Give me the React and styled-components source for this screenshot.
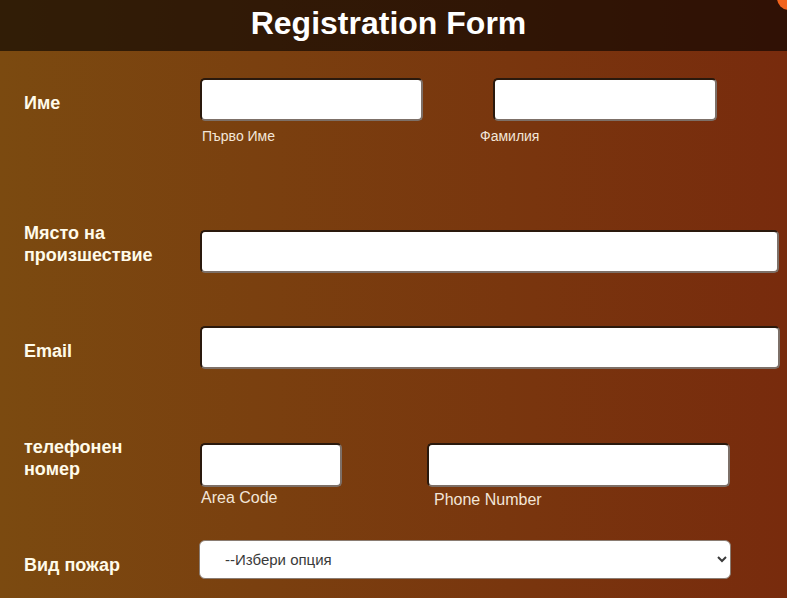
import React from "react";
import styled, { createGlobalStyle } from "styled-components";

const GlobalStyle = createGlobalStyle`
  html, body {
    margin: 0;
    padding: 0;
  }
  body {
    font-family: "Liberation Sans", Arial, sans-serif;
    background: linear-gradient(to right, #7b4a10, #782b0d);
    min-height: 100vh;
    overflow: hidden;
  }
`;

const Page = styled.div`
  position: relative;
  min-height: 598px;
`;

const Header = styled.header`
  height: 51px;
  box-sizing: border-box;
  background: rgba(0, 0, 0, 0.6);
  display: flex;
  align-items: center;
  justify-content: center;
  padding: 0 10px 5px 0;
`;

const Title = styled.h1`
  margin: 0;
  color: #fff;
  font-size: 32px;
  font-weight: bold;
  line-height: 1;
`;

const Glow = styled.div`
  position: absolute;
  top: -14px;
  right: -14px;
  width: 24px;
  height: 24px;
  border-radius: 50%;
  background: #f2631c;
`;

const Form = styled.form`
  display: flex;
  flex-direction: column;
  padding-top: 27px;
`;

const Row = styled.div`
  display: grid;
  grid-template-columns: 200px 1fr;
  align-items: start;
  height: ${(p) => p.$h || "auto"};
`;

const Label = styled.label`
  padding-left: 24px;
  margin-top: ${(p) => p.$offset || 0}px;
  color: #fffbea;
  font-size: 18px;
  font-weight: bold;
  line-height: 22px;
`;

const Fields = styled.div`
  display: flex;
  align-items: flex-start;
  margin-top: ${(p) => p.$offset || 0}px;
`;

const Group = styled.div`
  display: flex;
  flex-direction: column;
  width: ${(p) => p.$w || "auto"};
`;

const TextInput = styled.input`
  box-sizing: border-box;
  width: ${(p) => p.$w};
  height: ${(p) => p.$h || 43}px;
  margin-left: ${(p) => p.$ml || 0}px;
  border: 2px solid;
  border-color: #2a190d #7d7068 #7d7068 #2a190d;
  border-radius: 5px;
  background: #fff;
  padding: 0 8px;
  font-size: 16px;
  font-family: inherit;
`;

const Hint = styled.span`
  margin-top: ${(p) => p.$mt || 6}px;
  margin-left: ${(p) => p.$ml || 0}px;
  color: #f3e6d8;
  font-size: ${(p) => p.$size || 14}px;
  line-height: 18px;
`;

const Select = styled.select`
  box-sizing: border-box;
  width: 532px;
  height: 39px;
  margin-left: -1px;
  border: 1px solid #8a7c72;
  border-radius: 6px;
  background: #fff;
  padding: 0 21px;
  color: #3a3a3a;
  font-size: 15px;
  font-family: inherit;
`;

const App = () => (
  <Page>
    <GlobalStyle />
    <Header>
      <Title>Registration Form</Title>
    </Header>
    <Glow />
    <Form>
      <Row $h="144px">
        <Label $offset={14}>Име</Label>
        <Fields>
          <Group $w="280px">
            <TextInput $w="223px" />
            <Hint $ml={2} $mt={6}>Първо Име</Hint>
          </Group>
          <Group>
            <TextInput $w="224px" $ml={13} />
            <Hint $mt={6}>Фамилия</Hint>
          </Group>
        </Fields>
      </Row>

      <Row $h="104px">
        <Label>
          Място на
          <br />
          произшествие
        </Label>
        <Fields $offset={8}>
          <TextInput $w="579px" />
        </Fields>
      </Row>

      <Row $h="110px">
        <Label $offset={14}>Email</Label>
        <Fields>
          <TextInput $w="580px" />
        </Fields>
      </Row>

      <Row $h="104px">
        <Label>
          телефонен
          <br />
          номер
        </Label>
        <Fields $offset={7}>
          <Group $w="227px">
            <TextInput $w="142px" $h={44} />
            <Hint $ml={1} $mt={2} $size={16}>Area Code</Hint>
          </Group>
          <Group>
            <TextInput $w="303px" $h={44} />
            <Hint $ml={7} $mt={4} $size={16}>Phone Number</Hint>
          </Group>
        </Fields>
      </Row>

      <Row>
        <Label $offset={14}>Вид пожар</Label>
        <Fields>
          <Select defaultValue="">
            <option value="">--Избери опция</option>
            <option value="house">Жилищен</option>
            <option value="forest">Горски</option>
            <option value="industrial">Промишлен</option>
          </Select>
        </Fields>
      </Row>
    </Form>
  </Page>
);

export default App;
